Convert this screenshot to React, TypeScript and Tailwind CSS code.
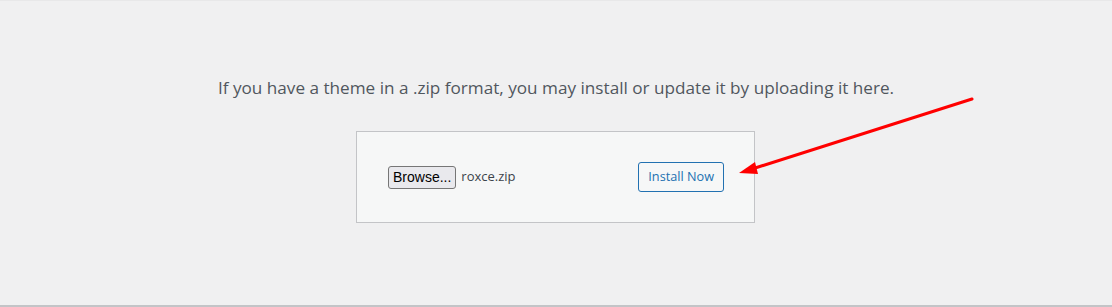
import React from "react";

export default function App() {
  return (
    <div className="relative h-[307px] w-[1112px] overflow-hidden bg-[#f0f0f1] font-['Open_Sans',sans-serif]">
      <div className="h-px w-full bg-[#e8e8e9]" />
      <div className="flex flex-col items-center pt-[66px]">
        <p className="text-[17.15px] leading-[42px] text-[#50575e]">
          If you have a theme in a .zip format, you may install or update it by uploading it here.
        </p>
        <form className="mt-[22px] mr-px flex h-[92px] w-[399px] items-center border border-[#c3c4c7] bg-[#f6f7f7] pl-[31px] pr-[30px]">
          <div className="flex items-center">
            <span className="flex h-[23px] items-center rounded-[3px] border border-[#767676] bg-[#e9e9ed] px-[4px] font-['Liberation_Sans',sans-serif] text-[14px] text-black">
              Browse...
            </span>
            <span className="ml-[5px] text-[13px] text-[#3c434a]">roxce.zip</span>
          </div>
          <button
            type="button"
            className="ml-auto flex h-[30px] items-center rounded-[3px] border border-[#2271b1] bg-[#f6f7f7] px-[9px] text-[12.7px] text-[#2271b1]"
          >
            Install Now
          </button>
        </form>
      </div>
      <div className="absolute bottom-0 left-0 h-[2px] w-full bg-[#c3c4c7]" />
      <svg className="pointer-events-none absolute left-0 top-0" width="1112" height="307">
        <line x1="972" y1="99" x2="752" y2="169" stroke="#ff0000" strokeWidth="3" strokeLinecap="round" />
        <polygon points="739,173 755,162 758,174" fill="#ff0000" />
      </svg>
    </div>
  );
}
